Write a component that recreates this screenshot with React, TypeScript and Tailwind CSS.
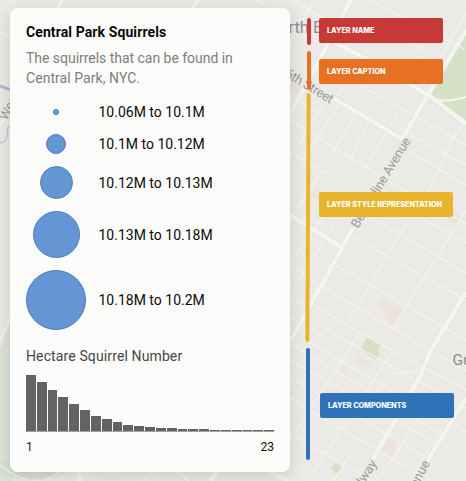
const ranges = [
  { label: '10.06M to 10.1M', dot: 'size-[6px]', row: 'h-[32px]', text: '' },
  { label: '10.1M to 10.12M', dot: 'size-[20px]', row: 'h-[32px]', text: '' },
  { label: '10.12M to 10.13M', dot: 'size-[33px]', row: 'h-[45px]', text: 'pt-[2px]' },
  { label: '10.13M to 10.18M', dot: 'size-[47px]', row: 'h-[59px]', text: 'pt-[2px]' },
  { label: '10.18M to 10.2M', dot: 'size-[60px]', row: 'h-[72px]', text: '' },
];

const bars = [56, 49, 41, 34, 27, 21.5, 15.5, 12, 9, 6, 5, 4.5, 3.5, 2.7, 2.3, 2, 1.7, 0.6, 0.6, 0.6, 0.6, 0.6, 0.6];

function StreetMap() {
  return (
    <svg className="absolute inset-0 h-full w-full" viewBox="0 0 466 481" fill="none">
      <rect width="466" height="481" fill="#ebeae6" />
      <path d="M0 350Q8 325 13 302V481H0Z" fill="#dce3d5" />
      <path d="M0 472Q36 488 66 472V462H0Z" fill="#d8dfd1" />
      <path d="M0 465Q33 492 60 472" stroke="#efefe9" strokeWidth="2" />
      <path d="M466 32L429 97Q443 104 466 97Z M430 101L466 124V97Q444 105 430 98Z" fill="#d5e0c5" />
      <path d="M367 337L381 343L378 351L380 354L376 360L360 350Z M336 463L342 467L337 474L331 469Z" fill="#d5e0c5" />
      <g fill="#ece4dc">
        <path d="M382 298L404 311L394 326L385 321L388 315L378 307Z M358 353L373 362L368 369L355 361Z M341 367L350 372L346 378L337 373Z M389 436L398 442L393 455L381 449Z M453 212L463 217L457 227L446 221Z M291 75L301 82L297 92L290 89Z M315 188L321 191L318 200L311 196Z M102 480L108 474L120 480Z" />
      </g>
      <g stroke="#f4f4ef" strokeWidth="1.2">
        <path d="M256 0L300 25L365 61M292 0L340 28M361 15L430 54M370 0L464 49M297 100L317 112M345 77L417 117L466 145M410 135L466 165M410 152L466 185M290 120L390 182L466 224M290 153L330 175M413 213L466 243M370 217L466 273M353 237L466 300M335 265L466 340M323 287L407 337L466 371M310 303L373 340L466 390M327 330L466 408M305 340L413 403L466 432M290 343L450 440M290 360L430 440M290 377L430 460M290 398L405 467M290 433L372 481M290 265L310 277M290 297L310 308M290 317L327 338" />
        <path d="M314 0L290 42M346 54L323 91M359 61L338 96M323 105L290 158M340 102L300 165M355 115L333 152M378 105L348 162M397 115L363 172M390 80L400 62M403 89L421 56M455 135L428 192M436 65L466 13M322 172L290 220M323 217L290 263M333 227L295 287M466 123L455 135M410 217L348 322M466 210L393 328M360 332L323 390L290 440M392 352L313 473M424 371L393 373Q382 380 372 400M420 417L390 463M442 430L413 473M355 448L333 481M398 452L375 481M290 400L300 390" />
      </g>
      <g stroke="#deddd8" strokeWidth="5.6" strokeLinejoin="round">
        <path d="M353 -4L291 113M322 36L376 64L428 95L466 124M333 98L402 139L466 30M353 228L291 340M290 215L341 247M466 292L430 352L420 377L373 459M466 398L426 463M198 0L188 14M62 0L56 13" />
      </g>
      <g stroke="#f5f5f0" strokeWidth="4.6" strokeLinejoin="round">
        <path d="M353 -4L291 113M322 36L376 64L428 95L466 124M333 98L402 139L466 30M353 228L291 340M290 215L341 247M466 292L430 352L420 377L373 459M466 398L426 463M198 0L188 14M62 0L56 13M79 471V481M268 470L288 481M218 470L210 481" />
        <path d="M429 97Q443 104 466 97" strokeWidth="2" />
      </g>
      <path d="M0 32L12 38M0 127L14 98M0 340Q11 326 13 295M90 471L80 481M155 471L143 481M177 471L189 481" stroke="#f3f3ee" strokeWidth="2" />
      <path d="M0 86L11 90" stroke="#a9bdd6" strokeWidth="3" />
      <path d="M11 126L7 128L8 134L5 141L0 143" stroke="#aac3df" />
      <g fill="#9c9c9b" fontFamily="Roboto, sans-serif" stroke="#ebeae6" strokeWidth="1.5" paintOrder="stroke">
        <text x="279" y="32.5" fontSize="16.5" fill="#8e8e93">orth B</text>
        <text x="452.5" y="364.5" fontSize="15.5" fill="#8e8e93">Gu</text>
        <text transform="translate(284 76) rotate(31)" fontSize="13.2" textLength="54">6th Street</text>
        <text transform="translate(358 229) rotate(-59)" fontSize="13" textLength="103">Bergenline Avenue</text>
        <text transform="translate(361 489) rotate(-57)" fontSize="13">dway</text>
        <text transform="translate(417 488) rotate(-62)" fontSize="13">enue</text>
        <text transform="translate(7 121) rotate(-65)" fontSize="13">West</text>
      </g>
    </svg>
  );
}

function Tag({ text, className }: { text: string; className: string }) {
  return (
    <div className={`flex items-center rounded-[2px] pl-2 font-['Inter'] text-[7.3px] leading-none font-extrabold tracking-[-0.06px] whitespace-nowrap text-white ${className}`}>
      <span>{text}</span>
    </div>
  );
}

function LegendPanel() {
  return (
    <section className="h-[464px] w-[280px] shrink-0 rounded-lg bg-[#fcfcfa]/98 px-4 pt-[14px] shadow-[0_4px_16px_rgba(44,44,44,0.18)]">
      <h1 className="text-[14px] leading-[20px] font-bold tracking-[0.1px] whitespace-nowrap text-[#080808]">Central Park Squirrels</h1>
      <p className="mt-[6px] text-[14px] leading-[20px] tracking-[-0.03px] whitespace-nowrap text-[#7e7e7c]">
        The squirrels that can be found in<br />
        <span className="tracking-[0.06px]">Central Park, NYC.</span>
      </p>
      <ul className="mt-[8px]">
        {ranges.map(({ label, dot, row, text }) => (
          <li key={label} className={`flex items-center ${row}`}>
            <span className="flex w-[60px] justify-center">
              <i className={`block rounded-full border border-[#4c7fb8] bg-[#6496d5] ${dot}`} />
            </span>
            <span className={`ml-[12.5px] text-[14px] tracking-[0px] whitespace-nowrap text-[#0b0b0b] ${text}`}>{label}</span>
          </li>
        ))}
      </ul>
      <h2 className="mt-[10px] text-[14px] leading-[20px] tracking-[0.12px] whitespace-nowrap text-[#464646]">Hectare Squirrel Number</h2>
      <div className="mt-[9px] flex h-[57px] items-end gap-px border-b border-[#a2a2a0]">
        {bars.map((height, i) => (
          <i key={i} className="block flex-1 bg-[#636361]" style={{ height }} />
        ))}
      </div>
      <div className="mt-[7px] flex justify-between text-[12px] leading-[16px] text-[#111]">
        <span>1</span>
        <span>23</span>
      </div>
    </section>
  );
}

export default function App() {
  return (
    <main className="relative h-[481px] w-[466px] overflow-hidden font-['Roboto',sans-serif]">
      <StreetMap />
      <div className="relative flex pt-2 pl-[10px]">
        <LegendPanel />
        <div className="ml-4 flex w-[5px] flex-col pt-[10px]">
          <i className="ml-px h-[27px] w-[4px] rounded-full bg-[#c63937]" />
          <i className="mt-[6px] ml-px h-[39px] w-[4px] rounded-full bg-[#e67122]" />
          <i className="mt-[3px] h-[249px] w-[4px] origin-center rotate-[0.3deg] rounded-full bg-[#e8b42c]" />
          <i className="mt-[6px] h-[112px] w-[4px] rounded-full bg-[#2e73b8]" />
        </div>
        <div className="ml-2 flex flex-col items-start pt-[10px]">
          <Tag text="LAYER NAME" className="h-[25px] w-[124px] bg-[#c63937]" />
          <Tag text="LAYER CAPTION" className="mt-4 h-[25px] w-[124px] bg-[#e67122]" />
          <Tag text="LAYER STYLE REPRESENTATION" className="mt-[108px] h-[25px] w-[134px] bg-[#e7b52d]" />
          <Tag text="LAYER COMPONENTS" className="mt-[176px] ml-px h-[25px] w-[134px] bg-[#2e73b8]" />
        </div>
      </div>
    </main>
  );
}
